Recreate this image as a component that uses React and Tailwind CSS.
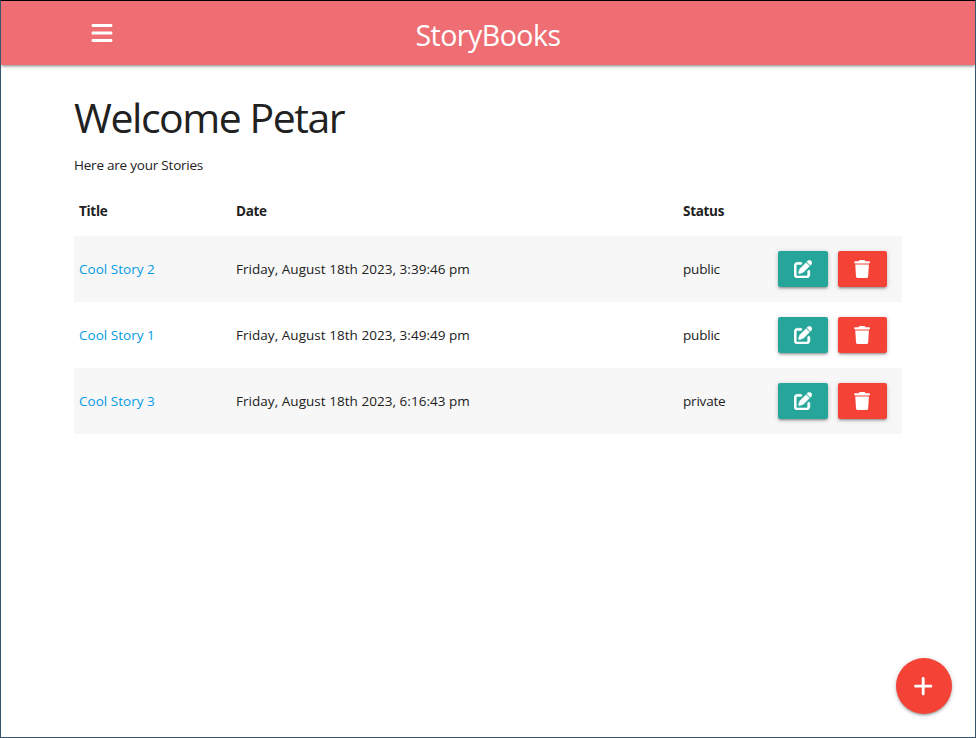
import { FaBars, FaPenToSquare, FaTrash, FaPlus } from "react-icons/fa6";

const stories = [
  { title: "Cool Story 2", date: "Friday, August 18th 2023, 3:39:46 pm", status: "public" },
  { title: "Cool Story 1", date: "Friday, August 18th 2023, 3:49:49 pm", status: "public" },
  { title: "Cool Story 3", date: "Friday, August 18th 2023, 6:16:43 pm", status: "private" },
];

const raised =
  "shadow-[0_2px_2px_0_rgba(0,0,0,0.14),0_3px_1px_-2px_rgba(0,0,0,0.12),0_1px_5px_0_rgba(0,0,0,0.2)]";
const columns = "grid grid-cols-[157px_447px_95px_1fr] items-center px-[5px]";

function StoryRow({ story }) {
  return (
    <div className={`${columns} h-[66px] odd:bg-[#f7f7f7]`}>
      <a href="#" className="tracking-[0.03px] text-[#039be5]">{story.title}</a>
      <span className="tracking-[0.04px]">{story.date}</span>
      <span className="tracking-[-0.2px]">{story.status}</span>
      <div className="flex gap-[10px] text-[18.2px] text-white">
        <button aria-label="Edit" className={`flex h-9 w-[50px] items-center justify-center rounded-xs bg-[#26a69a] ${raised}`}>
          <FaPenToSquare className="stroke-white stroke-[14]" />
        </button>
        <button aria-label="Delete" className={`flex h-9 w-[49px] items-center justify-center rounded-xs bg-[#f44336] ${raised}`}>
          <FaTrash />
        </button>
      </div>
    </div>
  );
}

export default function App() {
  return (
    <div className="relative h-[738px] w-[976px] overflow-hidden border border-[#36566b] border-t-black bg-white font-['Open_Sans',sans-serif] text-[13.5px] leading-[21px] text-[#212121]">
      <nav className={`grid h-16 grid-cols-3 bg-[#ee6e73] text-white ${raised}`}>
        <button aria-label="Menu" className="ml-[89px] mt-5 h-6 w-6 text-2xl">
          <FaBars />
        </button>
        <a href="#" className="pt-[2px] text-center text-[28.5px] leading-[64px] tracking-[-0.5px]">StoryBooks</a>
      </nav>
      <main className="ml-[73px] w-[828px]">
        <h1 className="pt-[29px] text-[41px] leading-[46px] tracking-[-1.45px]">Welcome Petar</h1>
        <p className="mt-[15px] tracking-[-0.22px]">Here are your Stories</p>
        <div className={`${columns} mt-[10px] h-[50px] font-bold tracking-[-0.3px]`}>
          <span>Title</span>
          <span>Date</span>
          <span>Status</span>
        </div>
        <div>
          {stories.map((story) => (
            <StoryRow key={story.title} story={story} />
          ))}
        </div>
      </main>
      <button aria-label="Add story" className={`absolute right-[23px] bottom-[23px] flex h-14 w-14 items-center justify-center rounded-full bg-[#f44336] pr-px text-[22.4px] text-white ${raised}`}>
        <FaPlus />
      </button>
    </div>
  );
}
